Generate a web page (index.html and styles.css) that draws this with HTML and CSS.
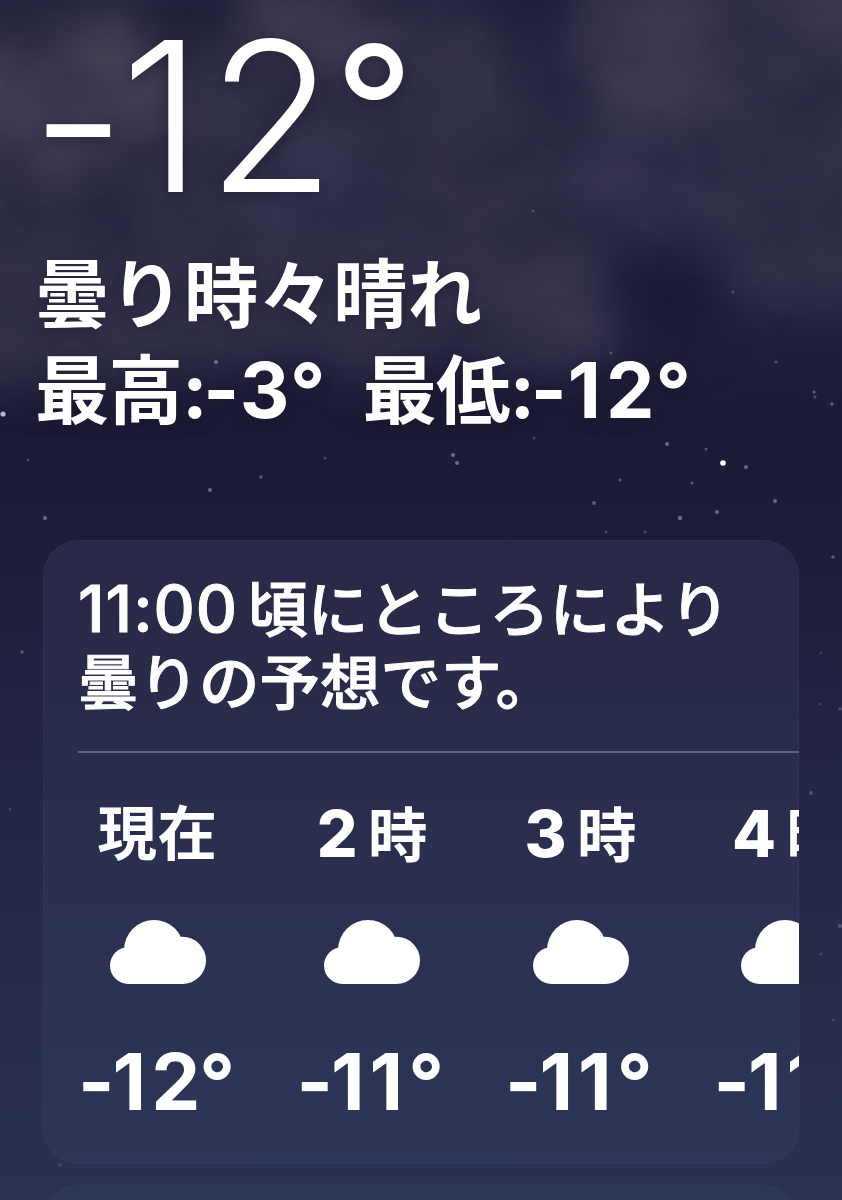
FILE: index.html
```html
<!DOCTYPE html>
<html lang="ja">
<head>
	<meta charset="UTF-8">
	<title>天気</title>
	<link rel="stylesheet" href="styles.css">
</head>
<body>
	<svg class="sky" viewBox="0 0 842 1200" aria-hidden="true">
		<defs>
			<linearGradient id="night" x1="0" y1="0" x2="0" y2="1">
				<stop offset="0" stop-color="#252640"/>
				<stop offset=".25" stop-color="#222240"/>
				<stop offset=".36" stop-color="#1c1b35"/>
				<stop offset=".45" stop-color="#1d1d39"/>
				<stop offset=".6" stop-color="#222441"/>
				<stop offset=".78" stop-color="#272b47"/>
				<stop offset="1" stop-color="#2a3250"/>
			</linearGradient>
			<linearGradient id="fade" x1="0" y1="0" x2="0" y2="1">
				<stop offset=".5" stop-color="#fff"/>
				<stop offset="1" stop-color="#000"/>
			</linearGradient>
			<mask id="top"><rect width="842" height="440" fill="url(#fade)"/></mask>
			<filter id="soft" x="-30%" y="-30%" width="160%" height="160%" color-interpolation-filters="sRGB">
				<feTurbulence type="fractalNoise" baseFrequency=".012" numOctaves="3" seed="7" result="n"/>
				<feDisplacementMap in="SourceGraphic" in2="n" scale="90" xChannelSelector="R" yChannelSelector="G"/>
				<feGaussianBlur stdDeviation="20"/>
			</filter>
			<filter id="wisp" x="0" y="0" width="100%" height="100%" color-interpolation-filters="sRGB">
				<feTurbulence type="fractalNoise" baseFrequency=".012 .016" numOctaves="4" seed="3"/>
				<feColorMatrix values="0 0 0 0 .1  0 0 0 0 .1  0 0 0 0 .2  2.6 0 0 0 -1.1"/>
				<feGaussianBlur stdDeviation="4"/>
			</filter>
			<filter id="dot"><feGaussianBlur stdDeviation=".7"/></filter>
			<symbol id="cloud" viewBox="0 0 96 64">
				<circle cx="18.4" cy="45.6" r="18.4"/>
				<circle cx="44" cy="30" r="30"/>
				<circle cx="72.4" cy="40.4" r="23.6"/>
				<rect x="18.4" y="36" width="54" height="28"/>
			</symbol>
		</defs>
		<rect width="842" height="1200" fill="url(#night)"/>
		<!-- clouds -->
		<g filter="url(#soft)">
			<path fill="#333149" opacity=".95" d="M-80 20H560L590 160 620 250 610 340 570 375 420 350 260 375 120 365-80 395z"/>
			<path fill="#32314a" opacity=".95" d="M570-60H940V300L790 320 730 300 710 240 600 210z"/>
			<ellipse cx="60" cy="90" rx="115" ry="60" fill="#443f55"/>
			<ellipse cx="310" cy="22" rx="80" ry="45" fill="#3e3a51"/>
			<ellipse cx="670" cy="50" rx="75" ry="70" fill="#3e3a50"/>
			<ellipse cx="835" cy="0" rx="60" ry="30" fill="#433a51"/>
			<ellipse cx="565" cy="325" rx="50" ry="55" fill="#3a374f"/>
			<ellipse cx="30" cy="5" rx="75" ry="30" fill="#272840"/>
			<ellipse cx="190" cy="30" rx="50" ry="30" fill="#212139"/>
			<ellipse cx="535" cy="10" rx="45" ry="38" fill="#20203b"/>
			<ellipse cx="550" cy="85" rx="22" ry="45" fill="#252540"/>
			<ellipse cx="680" cy="310" rx="45" ry="38" fill="#1c1b35"/>
			<ellipse cx="630" cy="170" rx="50" ry="35" fill="#34324f"/>
			<ellipse cx="330" cy="200" rx="90" ry="45" fill="#353450" opacity=".8"/>
			<ellipse cx="80" cy="215" rx="80" ry="30" fill="#2b2a43" opacity=".8"/>
		</g>
		<g mask="url(#top)">
			<rect width="842" height="440" filter="url(#wisp)" opacity=".25"/>
		</g>
		<!-- stars -->
		<g fill="#b9b9d0" filter="url(#dot)">
			<circle cx="3" cy="414" r="2.6"/>
			<circle cx="723" cy="463" r="2.8" fill="#fff"/>
			<circle cx="216" cy="362" r="2" opacity=".5"/>
			<circle cx="453" cy="455" r="2" opacity=".5"/>
			<circle cx="457" cy="463" r="2" opacity=".5"/>
			<circle cx="261" cy="477" r="1.8" opacity=".4"/>
			<circle cx="210" cy="490" r="2" opacity=".5"/>
			<circle cx="45" cy="518" r="2" opacity=".5"/>
			<circle cx="28" cy="460" r="1.5" opacity=".3"/>
			<circle cx="667" cy="444" r="2" opacity=".5"/>
			<circle cx="706" cy="449" r="1.5" opacity=".4"/>
			<circle cx="746" cy="467" r="2" opacity=".5"/>
			<circle cx="775" cy="501" r="2" opacity=".5"/>
			<circle cx="717" cy="512" r="2" opacity=".5"/>
			<circle cx="680" cy="518" r="2.2" opacity=".5"/>
			<circle cx="594" cy="503" r="2" opacity=".4"/>
			<circle cx="620" cy="480" r="1.6" opacity=".4"/>
			<circle cx="692" cy="483" r="1.5" opacity=".4"/>
			<circle cx="776" cy="362" r="1.7" opacity=".3"/>
			<circle cx="814" cy="392" r="1.7" opacity=".4"/>
			<circle cx="815" cy="397" r="1.7" opacity=".3"/>
			<circle cx="832" cy="404" r="1.8" opacity=".4"/>
			<circle cx="733" cy="292" r="1.7" opacity=".25"/>
			<circle cx="533" cy="211" r="1.6" opacity=".25"/>
			<circle cx="611" cy="353" r="1.6" opacity=".3"/>
			<circle cx="534" cy="438" r="1.5" opacity=".3"/>
			<circle cx="325" cy="458" r="1.5" opacity=".3"/>
			<circle cx="606" cy="532" r="1.6" opacity=".3"/>
			<circle cx="645" cy="532" r="1.6" opacity=".3"/>
			<circle cx="833" cy="557" r="1.8" opacity=".4"/>
			<circle cx="22" cy="652" r="1.8" opacity=".4"/>
			<circle cx="821" cy="653" r="1.4" opacity=".2"/>
			<circle cx="820" cy="704" r="1.4" opacity=".2"/>
			<circle cx="840" cy="709" r="1.8" opacity=".3"/>
			<circle cx="811" cy="793" r="2" opacity=".3"/>
			<circle cx="10" cy="809" r="1.5" opacity=".2"/>
			<circle cx="840" cy="926" r="2" opacity=".3"/>
			<circle cx="821" cy="954" r="1.5" opacity=".2"/>
			<circle cx="833" cy="1020" r="1.6" opacity=".2"/>
			<circle cx="60" cy="1165" r="1.8" opacity=".2"/>
		</g>
	</svg>
	<div class="screen">
		<div class="now">
			<h1><span class="minus">-</span>1<span class="last">2</span><span class="deg">°</span></h1>
			<p class="condition">曇り時々晴れ</p>
			<p class="range"><span>最高<b><span class="colon">:</span>-3°</b></span><span>最低<b><span class="colon">:</span>-<span class="one">1</span>2°</b></span></p>
		</div>
		<div class="card">
			<p class="summary"><b>11:00</b>頃にところにより<br>曇りの予想です。</p>
			<ul class="hours">
				<li class="current">
					<h3>現在</h3>
					<svg class="cloud"><use href="#cloud"/></svg>
					<p class="temp"><span class="minus">-</span>1<span class="two">2</span><span class="deg">°</span></p>
				</li>
				<li>
					<h3><b>2</b>時</h3>
					<svg class="cloud"><use href="#cloud"/></svg>
					<p class="temp"><span class="minus">-</span>11<span class="deg">°</span></p>
				</li>
				<li>
					<h3><b>3</b>時</h3>
					<svg class="cloud"><use href="#cloud"/></svg>
					<p class="temp"><span class="minus">-</span>11<span class="deg">°</span></p>
				</li>
				<li>
					<h3><b>4</b>時</h3>
					<svg class="cloud"><use href="#cloud"/></svg>
					<p class="temp"><span class="minus">-</span>11<span class="deg">°</span></p>
				</li>
			</ul>
		</div>
		<div class="card next"></div>
	</div>
</body>
</html>
```
FILE: styles.css
```css
body,ul,h1,h3,p{margin:0;padding:0;}
ul{list-style:none;}
body{
	height:1200px;
	overflow:hidden;
	color:#fff;
	background-color:#1f203c;
	font-family:Inter,"Noto Sans CJK JP",sans-serif;
}
.sky{
	position:absolute;
	left:0;
	top:0;
	width:842px;
	height:1200px;
}
.screen{
	position:relative;
	height:1200px;
	overflow:hidden;
}
.now{
	height:540px;
	text-shadow:0 4px 14px rgba(20,20,40,.45);
}
h1{
	height:247px;
	padding-left:31px;
	line-height:232px;
	font-size:209px;
	font-weight:300;
	letter-spacing:4px;
	white-space:nowrap;
}
h1 .minus{
	line-height:1;
	letter-spacing:-5px;
	vertical-align:-4px;
}
h1 .last{
	letter-spacing:-1px;
}
h1 .deg{
	line-height:1;
	font-size:175px;
	font-weight:400;
	vertical-align:21px;
}
.condition,.range{
	height:95px;
	padding-left:35px;
	line-height:97px;
	font-size:74.5px;
	font-weight:600;
	white-space:nowrap;
}
.range{
	display:flex;
	gap:36px;
	letter-spacing:-1px;
}
.range b{
	font-size:77px;
	font-weight:700;
	letter-spacing:1px;
}
.range .colon{
	letter-spacing:-4.5px;
}
.range .one{
	letter-spacing:5px;
}
.card{
	box-sizing:border-box;
	width:756px;
	height:624px;
	margin-left:43px;
	padding:32px 0 0 35px;
	border-radius:36px;
	overflow:hidden;
	background:linear-gradient(#272946,#2a2c4b 35%,#2b3050 55%,#2c3658);
	box-shadow:inset 0 0 0 1px rgba(90,110,150,.1);
}
.next{
	margin-top:21px;
	background:#2c3656;
}
.summary{
	height:179px;
	line-height:73px;
	font-size:60.5px;
	font-weight:500;
	white-space:nowrap;
	-webkit-text-stroke:1px #fff;
}
.summary b{
	margin-right:9px;
	font-size:64px;
	font-weight:500;
	letter-spacing:1px;
}
.hours{
	display:flex;
	width:900px;
	border-top:2px solid #62637e;
}
.hours li{
	flex:none;
	width:208.5px;
	text-align:center;
}
.hours .current{
	width:159px;
	margin-right:31px;
}
.hours h3{
	height:167px;
	line-height:161px;
	font-size:59.5px;
	font-weight:700;
	white-space:nowrap;
}
.hours h3 b{
	margin-right:10px;
	font-size:64px;
	font-weight:800;
}
.hours h3 b,.hours h3{
	letter-spacing:.4px;
}
.cloud{
	display:block;
	width:96px;
	height:64px;
	margin:0 auto;
	fill:#fff;
}
.temp{
	height:120px;
	margin-top:38px;
	line-height:120px;
	font-size:78px;
	font-weight:700;
	letter-spacing:5px;
	white-space:nowrap;
}
.temp .minus{
	letter-spacing:-2px;
}
.temp .two{
	letter-spacing:-1px;
}
.temp .deg{
	letter-spacing:4px;
}
```
